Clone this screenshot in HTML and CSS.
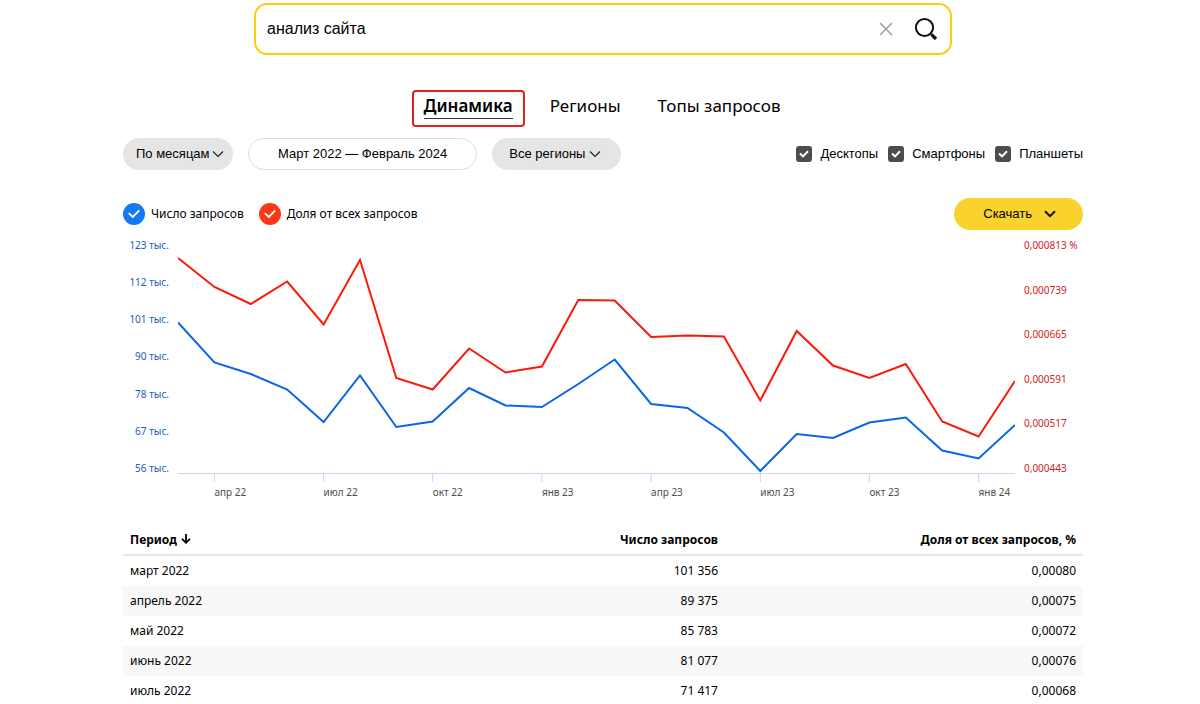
FILE: index.html
```html
<!DOCTYPE html>
<html lang="ru">
<head>
<meta charset="utf-8">
<title>Динамика запросов</title>
<link rel="stylesheet" href="styles.css">
</head>
<body>
<main class="page">
  <form class="search" role="search">
    <input class="search-input" type="text" value="анализ сайта" aria-label="Запрос">
    <button class="icon-button" type="reset" aria-label="Очистить">
      <svg width="14" height="14" viewBox="0 0 14 14" fill="none" stroke="#a3a3a3" stroke-width="1.7"><path d="M1 1L13 13M13 1L1 13"/></svg>
    </button>
    <button class="icon-button" type="submit" aria-label="Найти">
      <svg width="24" height="24" viewBox="0 0 24 24" fill="none" stroke="#111"><circle cx="10.5" cy="10.5" r="8.6" stroke-width="2"/><path d="M16.3 16.3L18 18" stroke-width="1.6"/><path d="M17.6 17.6L22 22" stroke-width="3.2"/></svg>
    </button>
  </form>

  <nav class="tabs">
    <a class="tab tab-active" href="#dynamics"><span class="tab-label">Динамика</span></a>
    <a class="tab" href="#regions">Регионы</a>
    <a class="tab" href="#tops">Топы запросов</a>
  </nav>

  <div class="filters">
    <div class="stack pill-select">
      <select class="pill" aria-label="Группировка"><option>По месяцам</option></select>
      <svg class="chevron" width="12" height="12" viewBox="0 0 12 12" fill="none" stroke="#222" stroke-width="1.2"><path d="M1 3.5L6 8.5L11 3.5"/></svg>
    </div>
    <button class="pill pill-range" type="button">Март 2022 — Февраль 2024</button>
    <div class="stack pill-select pill-select-wide">
      <select class="pill" aria-label="Регион"><option>Все регионы</option></select>
      <svg class="chevron" width="12" height="12" viewBox="0 0 12 12" fill="none" stroke="#222" stroke-width="1.2"><path d="M1 3.5L6 8.5L11 3.5"/></svg>
    </div>
    <div class="devices">
      <label class="device"><span class="stack"><input class="box" type="checkbox" checked><svg class="tick" width="10" height="8" viewBox="0 0 10 8" fill="none" stroke="#fff" stroke-width="2"><path d="M1 3.6L4 6.4L9 1.2"/></svg></span>Десктопы</label>
      <label class="device"><span class="stack"><input class="box" type="checkbox" checked><svg class="tick" width="10" height="8" viewBox="0 0 10 8" fill="none" stroke="#fff" stroke-width="2"><path d="M1 3.6L4 6.4L9 1.2"/></svg></span>Смартфоны</label>
      <label class="device"><span class="stack"><input class="box" type="checkbox" checked><svg class="tick" width="10" height="8" viewBox="0 0 10 8" fill="none" stroke="#fff" stroke-width="2"><path d="M1 3.6L4 6.4L9 1.2"/></svg></span>Планшеты</label>
    </div>
  </div>

  <div class="legend">
    <label class="series"><span class="stack"><input class="dot dot-blue" type="checkbox" checked><svg class="tick" width="12" height="10" viewBox="0 0 12 10" fill="none" stroke="#fff" stroke-width="1.8" stroke-linecap="round"><path d="M1.2 4.6L4.8 8L10.8 1.8"/></svg></span>Число запросов</label>
    <label class="series"><span class="stack"><input class="dot dot-red" type="checkbox" checked><svg class="tick" width="12" height="10" viewBox="0 0 12 10" fill="none" stroke="#fff" stroke-width="1.8" stroke-linecap="round"><path d="M1.2 4.6L4.8 8L10.8 1.8"/></svg></span>Доля от всех запросов</label>
    <button class="download" type="button">Скачать
      <svg width="12" height="8" viewBox="0 0 12 8" fill="none" stroke="#111" stroke-width="2"><path d="M1 1.2L6 6.2L11 1.2"/></svg>
    </button>
  </div>

  <section class="chart" aria-label="График запросов">
    <div class="scale scale-left">
      <span>123 тыс.</span><span>112 тыс.</span><span>101 тыс.</span><span>90 тыс.</span><span>78 тыс.</span><span>67 тыс.</span><span>56 тыс.</span>
    </div>
    <svg class="plot" viewBox="0 0 837 245" preserveAspectRatio="none" fill="none">
      <path class="axis" d="M0 236.5H837M36.4 237V245M145.6 237V245M254.7 237V245M363.9 237V245M473.1 237V245M582.3 237V245M691.4 237V245M800.6 237V245"/>
      <polyline class="line line-red" points="0,21 36.4,50 72.8,67 109.2,44.5 145.6,87.5 182,23 218.3,141 254.7,152.5 291.1,111.5 327.5,135.5 363.9,129.5 400.3,63 436.7,63.5 473.1,100 509.5,98.5 545.9,99.5 582.3,163.5 618.7,94 655,128.5 691.4,141 727.8,127 764.2,184.5 800.6,199.5 837,144"/>
      <polyline class="line line-blue" points="0,85.5 36.4,125.5 72.8,137 109.2,152.5 145.6,185 182,138.5 218.3,190 254.7,184.5 291.1,151 327.5,168.5 363.9,170 400.3,147 436.7,122.5 473.1,167 509.5,171 545.9,195.5 582.3,234 618.7,197 655,201 691.4,185.5 727.8,180.5 764.2,213.5 800.6,221.5 837,188"/>
    </svg>
    <div class="scale scale-right">
      <span>0,000813 %</span><span>0,000739</span><span>0,000665</span><span>0,000591</span><span>0,000517</span><span>0,000443</span>
    </div>
    <div class="months">
      <span>апр 22</span><span>июл 22</span><span>окт 22</span><span>янв 23</span><span>апр 23</span><span>июл 23</span><span>окт 23</span><span>янв 24</span>
    </div>
  </section>

  <table class="data">
    <thead>
      <tr><th>Период <svg width="10" height="10" viewBox="0 0 10 10" fill="none" stroke="#000" stroke-width="1.8"><path d="M5 0V8.6M1 4.8L5 8.8L9 4.8"/></svg></th><th>Число запросов</th><th>Доля от всех запросов, %</th></tr>
    </thead>
    <tbody>
      <tr><td>март 2022</td><td>101 356</td><td>0,00080</td></tr>
      <tr><td>апрель 2022</td><td>89 375</td><td>0,00075</td></tr>
      <tr><td>май 2022</td><td>85 783</td><td>0,00072</td></tr>
      <tr><td>июнь 2022</td><td>81 077</td><td>0,00076</td></tr>
      <tr><td>июль 2022</td><td>71 417</td><td>0,00068</td></tr>
    </tbody>
  </table>
</main>
</body>
</html>
```

FILE: styles.css
```css
* { box-sizing: border-box; }

body {
  margin: 0;
  padding: 3px 0 0 6px;
  background: #fff;
  color: #000;
  font: 12px/20px "Noto Sans", sans-serif;
}

button, input, select {
  margin: 0;
  border: 0;
  background: none;
  color: inherit;
  font: 13px/20px "Liberation Sans", Arial, sans-serif;
}

svg { display: block; }

.page {
  max-width: 960px;
  margin: 0 auto;
}

.stack {
  display: grid;
  align-items: center;
}
.stack > * { grid-area: 1 / 1; }

.search {
  display: flex;
  align-items: center;
  gap: 21px;
  max-width: 698px;
  height: 52px;
  margin: 0 auto;
  padding: 0 12px 0 11px;
  border: 2px solid #fbce0c;
  border-radius: 13px;
}
.search-input {
  flex: 1;
  min-width: 0;
  padding: 0;
  font-size: 16px;
  outline: none;
}
.icon-button { padding: 0; }

.tabs {
  display: flex;
  justify-content: center;
  align-items: baseline;
  gap: 25px;
  margin: 35px 14px 0 0;
  font-size: 17px;
  line-height: 24px;
}
.tab {
  color: inherit;
  text-decoration: none;
}
.tab:last-child { margin-left: 12px; }
.tab-active {
  padding: 2px 10px 6px;
  border: 2px solid #e22020;
  border-radius: 4px;
  font-weight: 600;
}
.tab-label {
  display: block;
  border-bottom: 1px solid #333;
}

.filters {
  display: flex;
  align-items: center;
  gap: 15px;
  margin-top: 11px;
}
.pill {
  height: 32px;
  border-radius: 16px;
  cursor: pointer;
}
.pill-select .pill {
  padding: 0 23px 0 13px;
  background: #e5e5e5;
  appearance: none;
}
.pill-select-wide .pill { padding: 0 35px 0 17px; }
.chevron {
  justify-self: end;
  margin-right: 9px;
  pointer-events: none;
}
.pill-select-wide .chevron { margin-right: 20px; }
.pill-range {
  padding: 0 29px;
  border: 1px solid #dedede;
}
.devices {
  display: flex;
  gap: 10px;
  margin-left: auto;
  font-family: "Liberation Sans", Arial, sans-serif;
  font-size: 13px;
}
.device {
  display: flex;
  align-items: center;
  gap: 8px;
}
.box {
  width: 16px;
  height: 16px;
  border-radius: 3px;
  background: #4d4d4d;
  appearance: none;
}
.tick {
  justify-self: center;
  pointer-events: none;
}

.legend {
  display: flex;
  align-items: center;
  gap: 15px;
  margin-top: 28px;
}
.series {
  display: flex;
  align-items: center;
  gap: 6px;
}
.dot {
  width: 22px;
  height: 22px;
  border-radius: 50%;
  appearance: none;
}
.dot-blue { background: #147aef; }
.dot-red { background: #fc3717; }
.download {
  display: flex;
  align-items: center;
  gap: 12px;
  height: 32px;
  margin-left: auto;
  padding: 0 27px 0 29px;
  border-radius: 16px;
  background: #fad22d;
}

.chart {
  display: grid;
  grid-template-columns: 46px 1fr 59px;
  column-gap: 9px;
  margin-top: 7px;
  font-size: 10px;
  line-height: 16px;
}
.scale {
  display: flex;
  flex-direction: column;
  justify-content: space-between;
  height: 239px;
  white-space: nowrap;
}
.scale-left {
  align-items: flex-end;
  color: #1c5cb8;
}
.scale-right { color: #d01c1c; }
.plot {
  width: 100%;
  height: 245px;
}
.axis { stroke: #cbd5ec; }
.line { stroke-width: 2; }
.line-red { stroke: #fb1a08; }
.line-blue { stroke: #0a66e8; }
.axis, .line { vector-effect: non-scaling-stroke; }
.months {
  grid-column: 2;
  display: grid;
  grid-template-columns: repeat(23, minmax(0, 1fr));
  margin-top: 2px;
  color: #4d4d4d;
  white-space: nowrap;
}
.months span { grid-column-end: span 3; }
.months span:first-child { grid-column: 2 / span 3; }
.months span:last-child { grid-column: 23; }

.data {
  width: 100%;
  margin-top: 25px;
  border-collapse: collapse;
  table-layout: fixed;
}
.data th, .data td {
  padding: 5px 7px;
  text-align: right;
}
.data th:nth-child(1), .data td:nth-child(1) { text-align: left; }
.data th:nth-child(3) { width: 358px; }
.data th {
  padding-bottom: 4px;
  border-bottom: 2px solid #e5e5e5;
  font-weight: 700;
}
.data th svg {
  display: inline;
  margin-left: 1px;
}
.data tbody tr:nth-child(even) { background: #f8f8f8; }
```
